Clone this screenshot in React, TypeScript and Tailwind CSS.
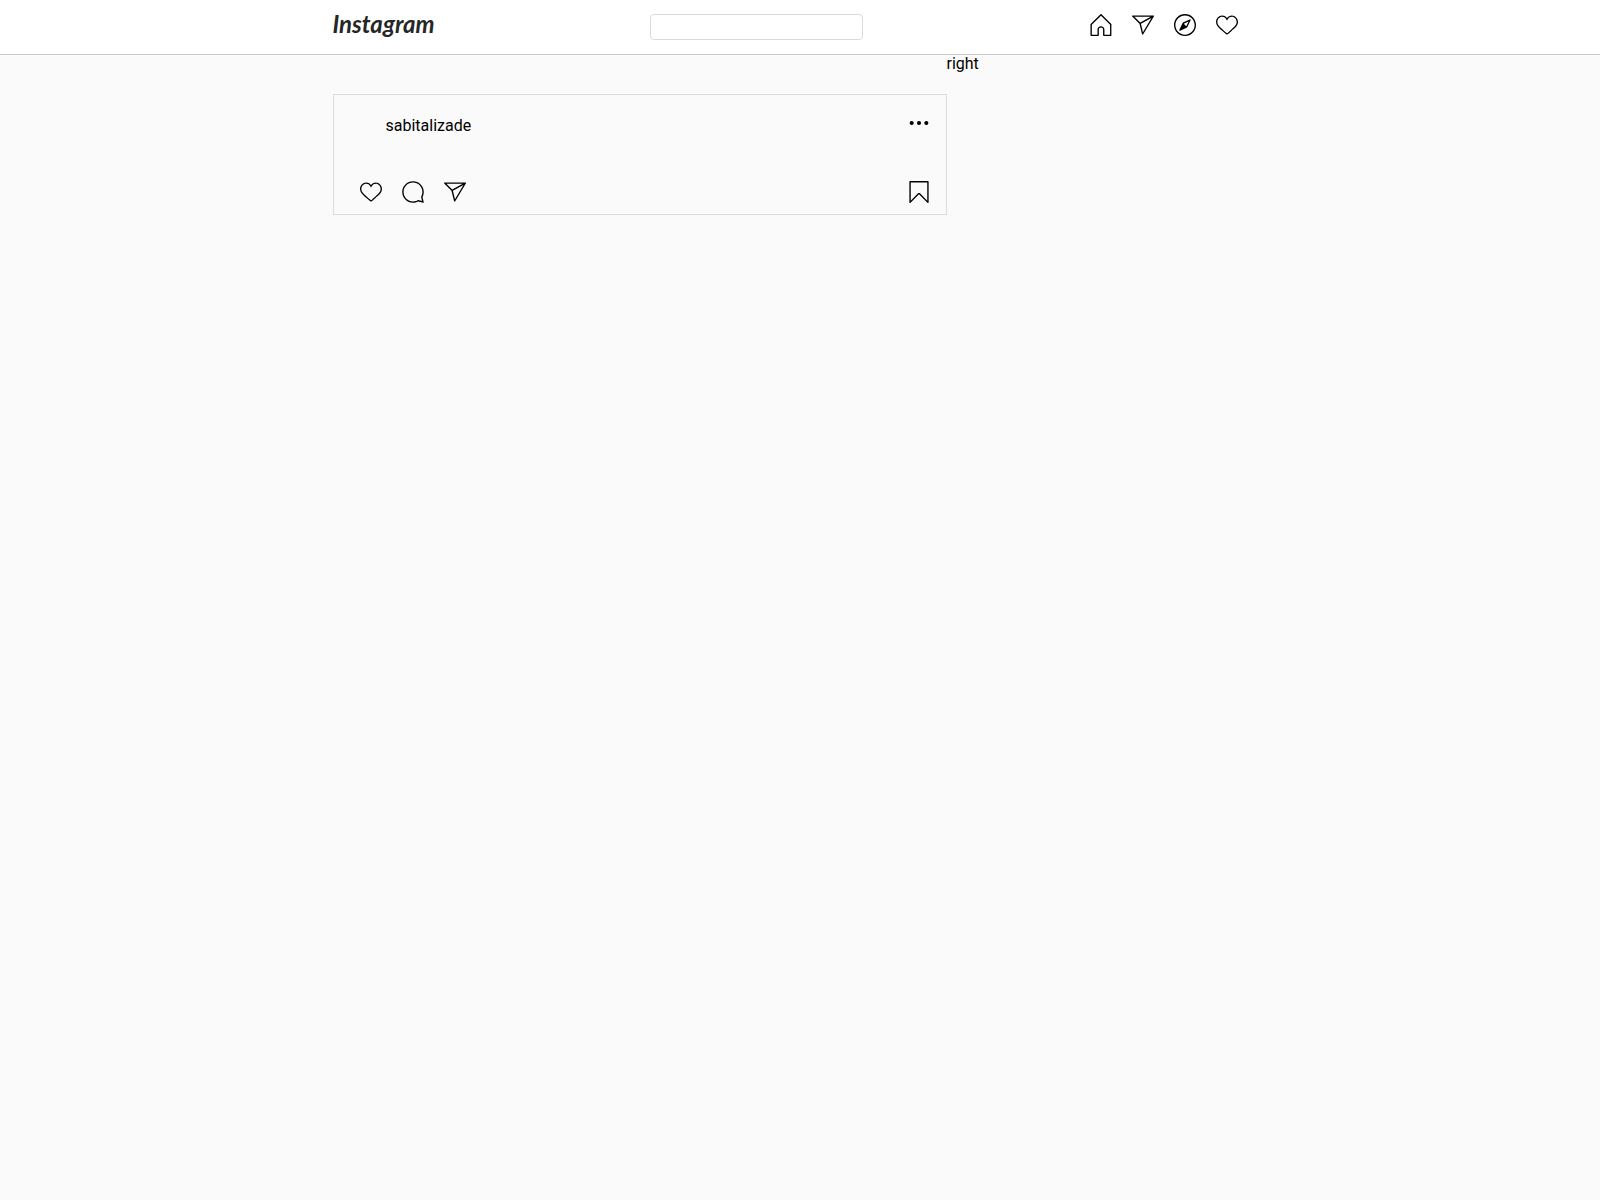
import type { ReactNode } from "react";

const iconPaths = {
  home: "M45.3 48H30c-.8 0-1.5-.7-1.5-1.5V34.2c0-2.6-2-4.6-4.6-4.6s-4.6 2-4.6 4.6v12.3c0 .8-.7 1.5-1.5 1.5H2.5c-.8 0-1.5-.7-1.5-1.5V23c0-.4.2-.8.4-1.1L22.9.4c.6-.6 1.6-.6 2.1 0l21.5 21.5c.4.4.6 1.1.3 1.6 0 .1-.1.1-.1.2v22.8c.1.8-.6 1.5-1.4 1.5zm-13.8-3h12.3V23.4L24 3.6l-20 20V45h12.3V34.2c0-4.3 3.3-7.6 7.6-7.6s7.6 3.3 7.6 7.6V45z",
  share:
    "M47.8 3.8c-.3-.5-.8-.8-1.3-.8h-45C.9 3.1.3 3.5.1 4S0 5.2.4 5.7l15.9 15.6 5.5 22.6c.1.6.6 1 1.2 1.1h.2c.5 0 1-.3 1.3-.7l23.2-39c.4-.4.4-1 .1-1.5zM5.2 6.1h35.5L18 18.7 5.2 6.1zm18.7 33.6l-4.4-18.4L42.4 8.6 23.9 39.7z",
  explore:
    "M24 0C10.8 0 0 10.7 0 24s10.7 24 24 24 24-10.7 24-24S37.3 0 24 0zm0 45C12.4 45 3 35.6 3 24S12.4 3 24 3s21 9.4 21 21-9.4 21-21 21zm10.2-33.2l-14.8 7c-.3.1-.6.4-.7.7l-7 14.8c-.3.6-.2 1.3.3 1.7.3.3.7.4 1.1.4.2 0 .4 0 .6-.1l14.8-7c.3-.1.6-.4.7-.7l7-14.8c.3-.6.2-1.3-.3-1.7-.4-.5-1.1-.6-1.7-.3zm-7.4 15l-5.5-5.5 10.5-5-5 10.5z",
  heart:
    "M34.6 6.1c5.7 0 10.4 5.2 10.4 11.5 0 6.8-5.9 11-11.5 16S25 41.3 24 41.9c-1.1-.7-4.7-4-9.5-8.3-5.7-5-11.5-9.2-11.5-16C3 11.3 7.7 6.1 13.4 6.1c4.2 0 6.5 2 8.1 4.3 1.9 2.6 2.2 3.9 2.5 3.9.3 0 .6-1.3 2.5-3.9 1.6-2.3 3.9-4.3 8.1-4.3m0-3c-4.5 0-7.9 1.8-10.6 5.6-2.7-3.7-6.1-5.5-10.6-5.5C6 3.1 0 9.6 0 17.6c0 7.3 5.4 12 10.6 16.5.6.5 1.3 1.1 1.9 1.7l2.3 2c4.4 3.9 6.6 5.9 7.6 6.5.5.3 1.1.5 1.6.5.6 0 1.1-.2 1.6-.5 1-.6 2.8-2.2 7.8-6.8l2-1.8c.7-.6 1.3-1.2 2-1.7C42.7 29.6 48 25 48 17.6c0-8-6-14.5-13.4-14.5z",
  comment:
    "M47.5 46.1l-2.8-11c1.8-3.3 2.8-7.1 2.8-11.1C47.5 11 37 .5 24 .5S.5 11 .5 24 11 47.5 24 47.5c4 0 7.8-1 11.1-2.8l11 2.8c.8.2 1.6-.6 1.4-1.4zm-3-22.1c0 4-1 7-2.6 10-.2.4-.3.9-.2 1.4l2.1 8.4-8.3-2.1c-.5-.1-1-.1-1.4.2-1.8 1-5.2 2.6-10 2.6-11.4 0-20.6-9.2-20.6-20.5S12.7 3.5 24 3.5 44.5 12.7 44.5 24z",
  save: "M43.5 48c-.4 0-.8-.2-1.1-.4L24 29 5.6 47.6c-.4.4-1.1.6-1.6.3-.6-.2-1-.8-1-1.4v-45C3 .7 3.7 0 4.5 0h39c.8 0 1.5.7 1.5 1.5v45c0 .6-.4 1.2-.9 1.4-.2.1-.4.1-.6.1zM24 26c.8 0 1.6.3 2.2.9l15.8 16V3H6v39.9l15.8-16c.6-.6 1.4-.9 2.2-.9z",
};

function IconButton({ label, children }: { label: string; children: ReactNode }) {
  return (
    <button type="button" aria-label={label} className="block size-[22px] cursor-pointer">
      <svg viewBox="0 0 48 48" className="size-full" fill="currentColor" aria-hidden="true">
        {children}
      </svg>
    </button>
  );
}

function Header() {
  return (
    <header className="border-b border-[#c8c8c8] bg-white">
      <div className="mx-auto flex h-[54px] max-w-[935px] items-start justify-between">
        <a href="#" className="mt-1.5 font-['Lato'] text-2xl leading-9 font-bold text-[#262626] italic">
          Instagram
        </a>
        <input
          type="search"
          aria-label="Search"
          className="mt-3.5 mr-[11px] h-[26px] w-[213px] rounded border border-[#dbdbdb] bg-white px-2 text-sm outline-none"
        />
        <nav aria-label="Main" className="mt-3.5 mr-[30px] flex gap-5">
          <IconButton label="Home"><path d={iconPaths.home} /></IconButton>
          <IconButton label="Messages"><path d={iconPaths.share} /></IconButton>
          <IconButton label="Explore"><path d={iconPaths.explore} /></IconButton>
          <IconButton label="Activity"><path d={iconPaths.heart} /></IconButton>
        </nav>
      </div>
    </header>
  );
}

function Post({ username }: { username: string }) {
  return (
    <article className="border border-[#dbdbdb]">
      <div className="flex items-start justify-between pt-[17px] pr-4 pl-[52px]">
        <a href="#" className="mt-1 leading-5">{username}</a>
        <IconButton label="More options">
          <circle cx="8" cy="24" r="4.5" />
          <circle cx="24" cy="24" r="4.5" />
          <circle cx="40" cy="24" r="4.5" />
        </IconButton>
      </div>
      <div className="mt-[45px] flex justify-between pr-4 pb-[11px] pl-[26px]">
        <div className="flex gap-5">
          <IconButton label="Like"><path d={iconPaths.heart} /></IconButton>
          <IconButton label="Comment"><path d={iconPaths.comment} /></IconButton>
          <IconButton label="Share"><path d={iconPaths.share} /></IconButton>
        </div>
        <IconButton label="Save"><path d={iconPaths.save} /></IconButton>
      </div>
    </article>
  );
}

export default function App() {
  return (
    <div className="min-h-screen bg-[#fafafa] font-['Roboto',sans-serif] text-base text-black">
      <Header />
      <main className="mx-auto flex max-w-[935px] items-start">
        <section aria-label="Feed" className="mt-[39px] w-full max-w-[614px]">
          <Post username="sabitalizade" />
        </section>
        <aside className="leading-[18px]">right</aside>
      </main>
    </div>
  );
}
